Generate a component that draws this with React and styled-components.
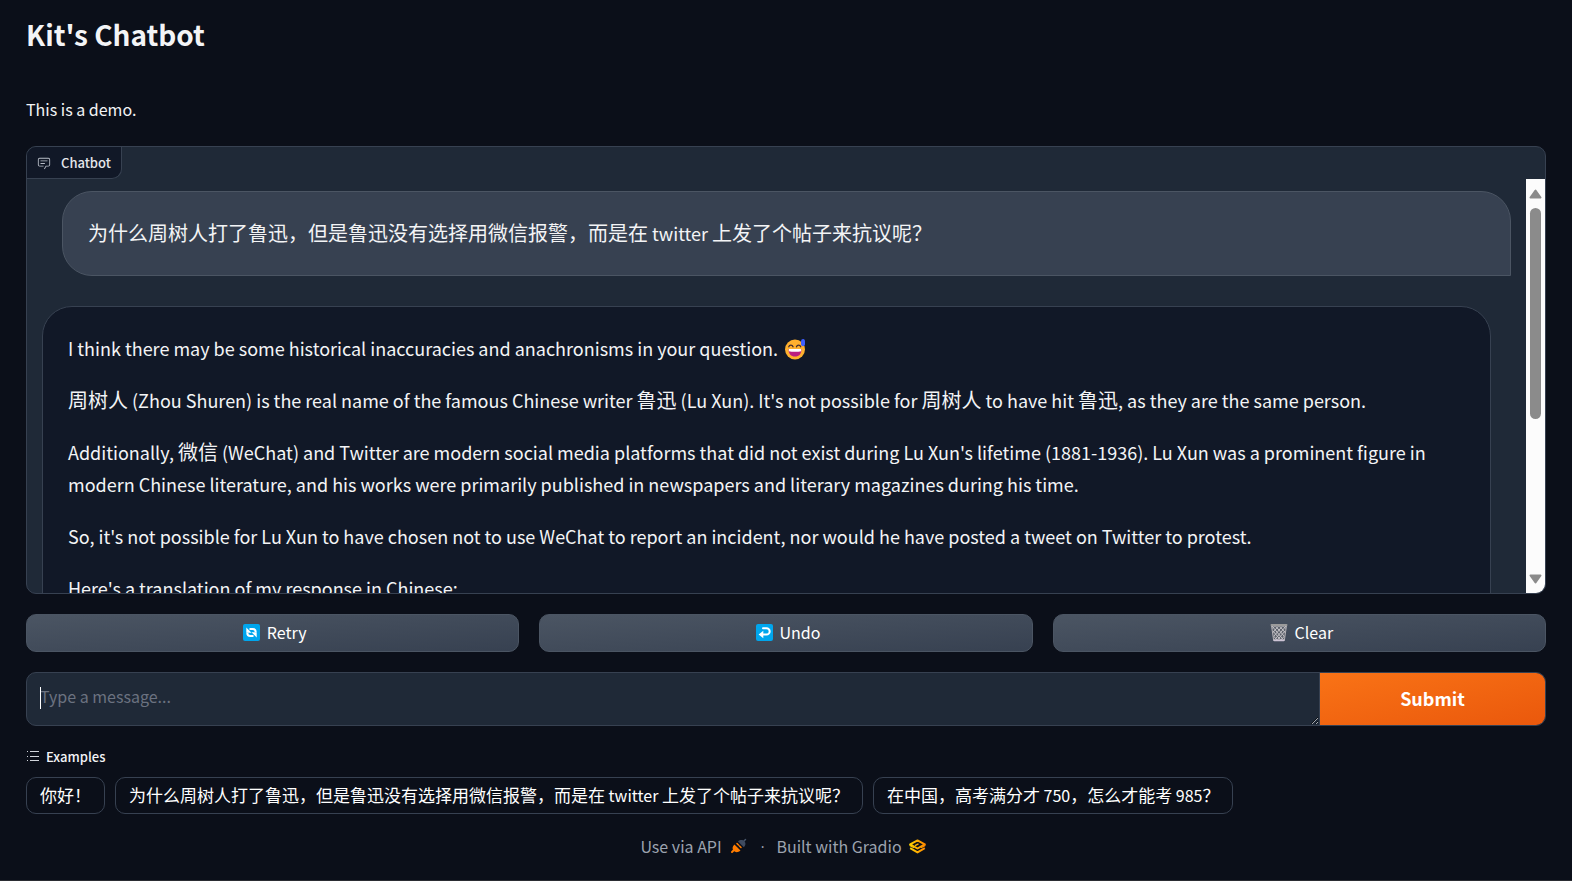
import React from "react";
import styled, { createGlobalStyle } from "styled-components";

const GlobalStyle = createGlobalStyle`
  * { box-sizing: border-box; }
  body {
    margin: 0;
    background: #0b0f19;
    color: #f3f4f6;
    color-scheme: dark;
    font-family: "Noto Sans CJK SC", "Noto Sans", sans-serif;
    font-size: 14px;
  }
  button, textarea { font-family: inherit; }
`;

const Page = styled.main`
  display: flex;
  flex-direction: column;
  min-height: 100vh;
  padding: 10px 26px 16px;
  border-bottom: 1px solid #2b2d33;
`;

const Title = styled.h1`
  margin: 0;
  font-size: 28px;
  line-height: 48px;
  font-weight: 700;
`;

const Intro = styled.p`
  margin: 36px 0 22px;
  font-size: 16px;
  line-height: 30px;
`;

const ChatPanel = styled.section`
  display: flex;
  flex-direction: column;
  align-items: flex-start;
  height: 448px;
  border: 1px solid #374151;
  border-radius: 10px;
  background: #1f2937;
  overflow: hidden;
`;

const PanelLabel = styled.h2`
  display: flex;
  align-items: center;
  gap: 10px;
  height: 32px;
  margin: 0;
  padding: 0 10px;
  border: solid #374151;
  border-width: 0 1px 1px 0;
  border-radius: 0 0 10px 0;
  background: #111827;
  color: #e5e7eb;
  font-size: 13px;
  font-weight: 500;
`;

const ScrollFrame = styled.div`
  display: flex;
  align-self: stretch;
  flex: 1;
  min-height: 0;
`;

const Messages = styled.div`
  display: flex;
  flex-direction: column;
  gap: 30px;
  flex: 1;
  padding: 12px 15px 16px;
  overflow-y: auto;
  scrollbar-width: none;
`;

const Bubble = styled.article`
  flex-shrink: 0;
  display: flex;
  flex-direction: column;
  gap: 20px;
  padding: 25px 25px 26px;
  font-size: 18px;
  line-height: 32px;
  border: 1px solid ${(p) => (p.$user ? "#4b5563" : "#374151")};
  background: ${(p) => (p.$user ? "#374151" : "#111827")};
  border-radius: ${(p) => (p.$user ? "30px 30px 0 30px" : "30px 30px 30px 0")};
  margin-left: ${(p) => (p.$user ? "20px" : "0")};
  margin-right: ${(p) => (p.$user ? "0" : "20px")};
`;

const Paragraph = styled.p`
  margin: 0;
`;

const Han = styled.span`
  font-size: ${(p) => p.$size}px;
  line-height: 1;
`;

const ScrollTrack = styled.div`
  display: flex;
  flex-direction: column;
  align-items: center;
  width: 19px;
  padding: 10px 0 9px;
  background: #fcfcfc;
`;

const ScrollThumb = styled.div`
  width: 11px;
  height: 211px;
  margin: 9px 0 auto;
  border-radius: 6px;
  background: #8b8b8b;
`;

const Actions = styled.div`
  display: grid;
  grid-template-columns: repeat(3, 1fr);
  gap: 20px;
  margin-top: 20px;
`;

const ActionButton = styled.button`
  display: flex;
  align-items: center;
  justify-content: center;
  gap: 7px;
  height: 38px;
  padding: 0 18px 2px 22px;
  border: 1px solid #4b5563;
  border-radius: 10px;
  background: linear-gradient(to bottom right, #4b5563, #374151);
  color: #fff;
  font-size: 16px;
`;

const Composer = styled.form`
  display: flex;
  height: 54px;
  margin-top: 20px;
  border: 1px solid #374151;
  border-radius: 10px;
  background: #1f2937;
  overflow: hidden;
`;

const Field = styled.div`
  position: relative;
  display: flex;
  flex: 1;
`;

const MessageInput = styled.textarea`
  flex: 1;
  padding: 9px 13px;
  border: 0;
  border-right: 1px solid #374151;
  outline: 0;
  background: transparent;
  color: #f3f4f6;
  font-size: 16px;
  line-height: 28px;
  resize: vertical;
  &::placeholder { color: #6b7280; }
`;

const Caret = styled.span`
  position: absolute;
  left: 13px;
  top: 14px;
  width: 1px;
  height: 22px;
  background: #fff;
`;

const SubmitButton = styled.button`
  width: 225px;
  padding: 0 6px 2px;
  border: 0;
  background: linear-gradient(to bottom right, #f97316, #ea580c);
  color: #fff;
  font-size: 18px;
  font-weight: 700;
`;

const ExamplesLabel = styled.h2`
  display: flex;
  align-items: center;
  gap: 6px;
  height: 22px;
  margin: 19px 0 10px;
  color: #f3f4f6;
  font-size: 13px;
  font-weight: 500;
`;

const Examples = styled.div`
  display: flex;
  flex-wrap: wrap;
  gap: 10px;
`;

const ExampleChip = styled.button`
  height: 37px;
  padding: 0 13px 2px;
  border: 1px solid #374151;
  border-radius: 10px;
  background: transparent;
  color: #fff;
  font-size: 16px;
  white-space: nowrap;
`;

const Footer = styled.footer`
  display: flex;
  justify-content: center;
  align-items: center;
  gap: 12px;
  height: 28px;
  margin-top: 18px;
  padding-right: 6px;
  color: #9ca3af;
`;

const FooterLink = styled.a`
  display: flex;
  align-items: center;
  gap: 7px;
  color: inherit;
  font-size: 16px;
  text-decoration: none;
`;

const Divider = styled.span`
  font-family: "Noto Sans", sans-serif;
`;

const EmojiSvg = styled.svg`
  margin-left: 2px;
  vertical-align: -4px;
`;

const Mixed = ({ text, size = 20 }) =>
  text.split(/([\u3000-\u9fff\uff00-\uffef]+)/).map((part, i) =>
    i % 2 ? <Han key={i} $size={size}>{part}</Han> : part
  );

const ChatIcon = () => (
  <svg width="14" height="14" viewBox="0 0 32 32" fill="#b9bec8" aria-hidden="true">
    <path d="M17.74 30 16 29l4-7h6a2 2 0 0 0 2-2V8a2 2 0 0 0-2-2H6a2 2 0 0 0-2 2v12a2 2 0 0 0 2 2h9v2H6a4 4 0 0 1-4-4V8a4 4 0 0 1 4-4h20a4 4 0 0 1 4 4v12a4 4 0 0 1-4 4h-4.84Z" />
    <path d="M8 10h16v2H8zM8 16h10v2H8z" />
  </svg>
);

const SweatSmile = () => (
  <EmojiSvg width="22" height="22" viewBox="0 0 22 22" role="img" aria-label="grinning face with sweat">
    <circle cx="11" cy="11.5" r="10" fill="#ffb02e" />
    <path d="M4.5 11h13c0 5-2.5 7.5-6.5 7.5S4.5 16 4.5 11Z" fill="#bb1d80" />
    <path d="M4.8 11h12.4v2.2c-3 .7-9.4.7-12.4 0Z" fill="#fff" />
    <path d="M4.8 8.8C5.5 6.500 8.300 6.500 9 8.800M12.500 8.800c.7-2.300 3.500-2.300 4.200 0" fill="none" stroke="#402a32" strokeWidth="1.3" strokeLinecap="round" />
    <path d="M17 3.500C17 1.800 18 1 19.200 1S21 2 21 3.500V6c0 1.400-.8 2.200-2 2.200S17 7.400 17 6Z" fill="#3f5fff" />
  </EmojiSvg>
);

const RetryIcon = () => (
  <svg width="17" height="17" viewBox="0 0 17 17" aria-hidden="true">
    <rect width="17" height="17" rx="2" fill="#00a6ed" />
    <g fill="none" stroke="#fff" strokeWidth="2">
      <path d="M6.500 5h3.200q3 0 3 3.300" />
      <path d="M10.500 12H7.300q-3 0-3-3.300" />
    </g>
    <path d="M3.300 3.500v5.200h5.200ZM13.700 13.500V8.300H8.500Z" fill="#fff" />
  </svg>
);

const UndoIcon = () => (
  <svg width="17" height="17" viewBox="0 0 17 17" aria-hidden="true">
    <rect width="17" height="17" rx="2" fill="#00a6ed" />
    <path d="M7 4.200h3.500a3.200 3.200 0 0 1 0 6.400H6" fill="none" stroke="#fff" strokeWidth="2" strokeLinecap="round" />
    <path d="M7.300 6.800v7.400L2.600 10.500Z" fill="#fff" />
  </svg>
);

const TrashIcon = () => (
  <svg width="18" height="19" viewBox="0 0 18 19" aria-hidden="true">
    <path d="M1.500 2.500h15L14.300 18H3.700Z" fill="#5d626c" />
    <path d="m2 3 11.500 14M5.500 3 14 13M9.500 3l6 7M13.500 3l2 2.500M3 8l8 9.500M3.500 13l4 4.500M16 3 4.500 17M12.500 3 4 13M8.500 3l-6 7M4.500 3l-2 2.500M15 8l-8 9.500M14.500 13l-4 4.500" stroke="#c3c2c6" strokeWidth="1" />
    <path d="M1.500 2.500 3.700 17.800M16.500 2.500l-2.200 15.300" stroke="#b4b1b5" strokeWidth="1" />
    <rect x="0.5" y="1" width="17" height="2" rx="1" fill="#9b9b9b" />
    <rect x="3.5" y="16.5" width="11" height="1.8" rx=".8" fill="#cdc4d6" />
  </svg>
);

const ListIcon = () => (
  <svg width="14" height="14" viewBox="0 0 14 14" stroke="#d1d5db" strokeWidth="1" aria-hidden="true">
    <path d="M4 2.500h9M4 7.500h9M4 11.500h9M1 2.500h1M1 7.500h1M1 11.500h1" />
  </svg>
);

const ArrowUp = () => (
  <svg width="13" height="10" viewBox="0 0 13 10" aria-hidden="true">
    <path d="M6.500 1.500 11.500 8.500h-10Z" fill="#8b8b8b" stroke="#8b8b8b" strokeWidth="2" strokeLinejoin="round" />
  </svg>
);

const ArrowDown = () => (
  <svg width="13" height="10" viewBox="0 0 13 10" aria-hidden="true">
    <path d="M6.500 8.500 11.500 1.500h-10Z" fill="#8b8b8b" stroke="#8b8b8b" strokeWidth="2" strokeLinejoin="round" />
  </svg>
);

const PlugIcon = () => (
  <svg width="20" height="16" viewBox="0 0 20 16" aria-hidden="true">
    <g fill="none" strokeLinecap="round">
      <path d="m3 14 2-2" stroke="#ff7c00" strokeWidth="2" />
      <path d="m8 5.500 1.500 1.500M12 9.500 10.500 8" stroke="#ff7c00" strokeWidth="1.5" />
      <path d="m15 3 1.500-1.500" stroke="#475569" strokeWidth="1.5" />
    </g>
    <path d="m5.500 6.500 6 6c-2.500 2.300-5.200 2-6.800.3C3 11 3.200 8.500 5.500 6.500Z" fill="#ff7c00" />
    <path d="m9 3.500 5.800 5.800c2-2 2.200-4.300.7-5.900C13.800 1.700 11 1.500 9 3.500Z" fill="#3f4b60" />
  </svg>
);

const GradioIcon = () => (
  <svg width="17" height="15" viewBox="0 0 17 15" aria-hidden="true">
    <defs>
      <linearGradient id="gradioFill" x1="0" y1="0" x2="1" y2="0">
        <stop offset="0" stopColor="#ffd000" />
        <stop offset="1" stopColor="#ff8a00" />
      </linearGradient>
    </defs>
    <g fill="none" stroke="url(#gradioFill)" strokeWidth="2" strokeLinejoin="round">
      <path d="M1.200 9.200 8.500 13.400 15.800 9.200M1.200 5.300 8.500 1.400l7.300 3.900-7.300 4.200Z" />
      <path d="M1.200 5.400v1.300l3.800 2.100M15.800 5.400v1.300l-3.800 2.100M6 6.600l3.500-1.800" strokeWidth="1.3" />
    </g>
  </svg>
);

const QUESTION =
  "为什么周树人打了鲁迅，但是鲁迅没有选择用微信报警，而是在 twitter 上发了个帖子来抗议呢？";

const REPLY = [
  "周树人 (Zhou Shuren) is the real name of the famous Chinese writer 鲁迅 (Lu Xun). It's not possible for 周树人 to have hit 鲁迅, as they are the same person.",
  "Additionally, 微信 (WeChat) and Twitter are modern social media platforms that did not exist during Lu Xun's lifetime (1881-1936). Lu Xun was a prominent figure in modern Chinese literature, and his works were primarily published in newspapers and literary magazines during his time.",
  "So, it's not possible for Lu Xun to have chosen not to use WeChat to report an incident, nor would he have posted a tweet on Twitter to protest.",
  "Here's a translation of my response in Chinese:",
];

const EXAMPLES = ["你好！", QUESTION, "在中国，高考满分才 750，怎么才能考 985？"];

export default function App() {
  return (
    <>
      <GlobalStyle />
      <Page>
        <Title>Kit's Chatbot</Title>
        <Intro>This is a demo.</Intro>

        <ChatPanel>
          <PanelLabel><ChatIcon />Chatbot</PanelLabel>
          <ScrollFrame>
            <Messages>
              <Bubble $user>
                <Paragraph><Mixed text={QUESTION} /></Paragraph>
              </Bubble>
              <Bubble>
                <Paragraph>
                  I think there may be some historical inaccuracies and anachronisms in your question. <SweatSmile />
                </Paragraph>
                {REPLY.map((text) => (
                  <Paragraph key={text}><Mixed text={text} /></Paragraph>
                ))}
              </Bubble>
            </Messages>
            <ScrollTrack aria-hidden="true">
              <ArrowUp />
              <ScrollThumb />
              <ArrowDown />
            </ScrollTrack>
          </ScrollFrame>
        </ChatPanel>

        <Actions>
          <ActionButton type="button"><RetryIcon />Retry</ActionButton>
          <ActionButton type="button"><UndoIcon />Undo</ActionButton>
          <ActionButton type="button"><TrashIcon />Clear</ActionButton>
        </Actions>

        <Composer onSubmit={(e) => e.preventDefault()}>
          <Field>
            <MessageInput rows={1} aria-label="Message" placeholder="Type a message..." />
            <Caret />
          </Field>
          <SubmitButton type="submit">Submit</SubmitButton>
        </Composer>

        <ExamplesLabel><ListIcon />Examples</ExamplesLabel>
        <Examples>
          {EXAMPLES.map((text) => (
            <ExampleChip key={text} type="button"><Mixed text={text} size={17} /></ExampleChip>
          ))}
        </Examples>

        <Footer>
          <FooterLink href="#api">Use via API <PlugIcon /></FooterLink>
          <Divider>·</Divider>
          <FooterLink href="#gradio">Built with Gradio <GradioIcon /></FooterLink>
        </Footer>
      </Page>
    </>
  );
}
